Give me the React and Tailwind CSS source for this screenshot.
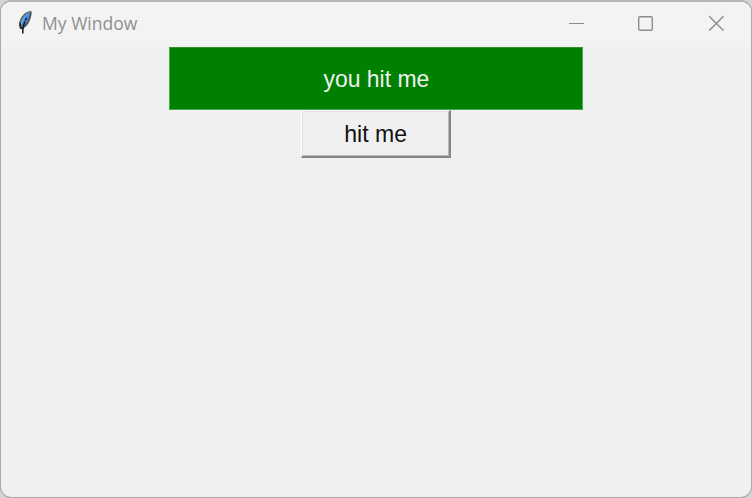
function Feather() {
  return (
    <svg className="h-[26px] w-[16px] shrink-0" viewBox="0 0 16 26" fill="none">
      <path d="M14 1.6 C9.5 1.5 5 5.5 3.2 11 C2.3 14 2.4 17 3.6 18.5 C7 18 10.8 15 12.6 9.5 C13.8 6 14.5 4 14 1.6Z" fill="#4488d8" stroke="#6b6662" strokeWidth="1.2" />
      <path d="M11.5 3.6 C8.5 5.5 5.5 10 4.4 14" stroke="#8fb2dc" strokeWidth="0.9" />
      <path d="M13.6 3 C13 8 11 13.5 7 16.5" stroke="#4b4744" strokeWidth="1.1" />
      <path d="M9.5 8 L8.3 10.5 M8 11.5 C7 14 6 16.5 5.8 19 L5.8 23.5" stroke="#151515" strokeWidth="1.5" />
      <path d="M3 12.5 L3.8 18 L6.6 18.5" stroke="#252525" strokeWidth="1.5" />
    </svg>
  );
}

function TitleBar() {
  return (
    <header className="flex h-[45px] shrink-0 items-start justify-between bg-[#f3f3f3]">
      <div className="flex pl-[16px] pt-[8px]">
        <Feather />
        <h1 className="ml-[9px] mt-px whitespace-nowrap font-['Open_Sans',sans-serif] text-[18px] leading-[24px] text-[#8f8f8f]">
          <span className="inline-block origin-left scale-x-[0.975]">My Window</span>
        </h1>
      </div>
      <div className="flex pr-[27px] pt-[13px] text-[#8c8c8c]">
        <button aria-label="Minimize" className="mr-[53px] flex h-4 w-4 items-center">
          <svg className="h-4 w-4" viewBox="0 0 16 16">
            <path d="M1 8.5H16" stroke="currentColor" />
          </svg>
        </button>
        <button aria-label="Maximize" className="mr-[55px] h-4 w-4">
          <svg className="h-4 w-4" viewBox="0 0 16 16" fill="none">
            <rect x="1.7" y="1.7" width="13.6" height="13.6" rx="1.4" stroke="currentColor" strokeWidth="1.4" />
          </svg>
        </button>
        <button aria-label="Close" className="h-4 w-4">
          <svg className="h-4 w-4" viewBox="0 0 16 16" fill="none">
            <path d="M1.2 1.2L15.6 15.6M15.6 1.2L1.2 15.6" stroke="currentColor" strokeWidth="1.4" />
          </svg>
        </button>
      </div>
    </header>
  );
}

export default function App() {
  return (
    <div className="h-[498px] w-[752px] overflow-hidden bg-[#d5d5d5] font-['Liberation_Sans',Arial,sans-serif]">
      <div className="flex h-full flex-col overflow-hidden rounded-[11px] border border-t-2 border-[#a9a9a9] border-t-[#b5b5b5] bg-[#f0f0f0]">
        <TitleBar />
        <main className="flex flex-1 flex-col items-center">
          <div className="flex h-[63px] w-[414px] items-center justify-center border border-[#4fa64f] border-t-[#2f962f] bg-[#008000]">
            <span className="whitespace-nowrap text-[24px] leading-[28px] text-[#f0f0f0]">
              <span className="inline-block scale-x-[0.955]">you hit me</span>
            </span>
          </div>
          <button className="flex h-[48px] w-[150px] border-b-2 border-l border-r-2 border-t border-b-[#858585] border-l-white border-r-[#858585] border-t-white bg-[#f0f0f0] text-[24px] leading-[28px] text-[#111]">
            <span className="flex h-full w-full items-center justify-center border border-b-[#bcbcbc] border-l-[#e1e1e1] border-r-[#bcbcbc] border-t-[#e1e1e1]">
              <span className="inline-block scale-x-[0.96]">hit me</span>
            </span>
          </button>
        </main>
      </div>
    </div>
  );
}
